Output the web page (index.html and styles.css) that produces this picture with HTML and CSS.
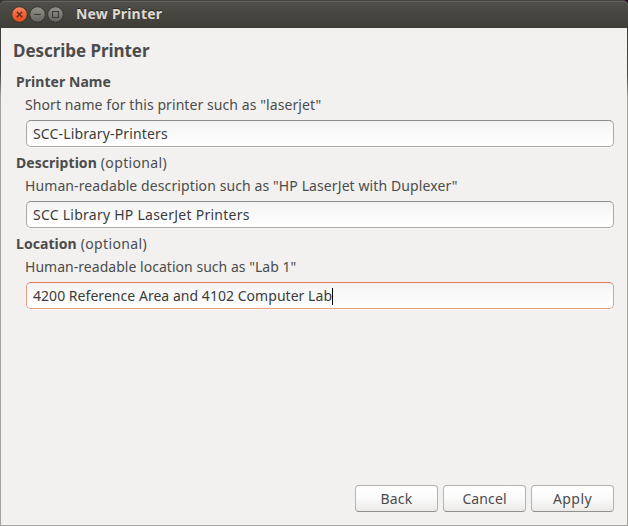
FILE: index.html
```html
<!DOCTYPE html>
<html lang="en">
<head>
<meta charset="utf-8">
<title>New Printer</title>
<link rel="stylesheet" href="styles.css">
</head>
<body>
<div class="window">
  <header class="titlebar">
    <svg class="controls" width="54" height="18" viewBox="0 0 54 18">
      <defs>
        <linearGradient id="orange" x1="0" y1="0" x2="0" y2="1"><stop offset="0" stop-color="#f58a63"/><stop offset=".5" stop-color="#ee6237"/><stop offset="1" stop-color="#e24c1d"/></linearGradient>
        <linearGradient id="grey" x1="0" y1="0" x2="0" y2="1"><stop offset="0" stop-color="#92918a"/><stop offset="1" stop-color="#65645d"/></linearGradient>
      </defs>
      <g stroke="#35342f">
        <circle cx="8.5" cy="9.5" r="7.8" fill="url(#orange)"/>
        <circle cx="26.5" cy="9.5" r="7.8" fill="url(#grey)"/>
        <circle cx="44.5" cy="9.5" r="7.8" fill="url(#grey)"/>
      </g>
      <g fill="none" stroke="#3c3b37" stroke-width="1.1">
        <path d="M5.800 6.800l5.400 5.400M11.200 6.800l-5.400 5.400" stroke="#622a17" stroke-width="1.300"/>
        <path d="M23 9.500h7"/>
        <path d="M41.500 6.500h6v6h-6z"/>
      </g>
    </svg>
    <span class="title">New Printer</span>
  </header>
  <main class="content">
    <h1 class="heading">Describe Printer</h1>
    <section class="group">
      <div class="label"><b class="name">Printer Name</b></div>
      <div class="hint hint-name">Short name for this printer such as "laserjet"</div>
      <div class="entry"><span class="value-name">SCC-Library-Printers</span></div>
    </section>
    <section class="group">
      <div class="label"><b class="name">Description</b> <span class="optional">(optional)</span></div>
      <div class="hint hint-description">Human-readable description such as "HP LaserJet with Duplexer"</div>
      <div class="entry"><span class="value-description">SCC Library HP LaserJet Printers</span></div>
    </section>
    <section class="group">
      <div class="label"><b class="name">Location</b> <span class="optional">(optional)</span></div>
      <div class="hint hint-location">Human-readable location such as "Lab 1"</div>
      <div class="entry focused"><span class="value-location">4200 Reference Area and 4102 Computer Lab</span><i class="caret"></i></div>
    </section>
  </main>
  <footer class="actions">
    <button class="button back">Back</button>
    <button class="button cancel">Cancel</button>
    <button class="button apply">Apply</button>
  </footer>
</div>
</body>
</html>
```
FILE: styles.css
```css
* { box-sizing: border-box; }
body {
  margin: 0;
  background: linear-gradient(90deg, #34332f 50%, #2c0a22 50%);
  font: 14px/20px "Noto Sans", sans-serif;
  color: #4c4c4c;
}
.window {
  display: flex;
  flex-direction: column;
  width: 628px;
  height: 526px;
  border-radius: 5px 5px 0 0;
  overflow: hidden;
  background: linear-gradient(#3c3b37 28px, #4b4a46 75px, #a5a39f 98px);
  padding: 0 1px 1px;
}
.titlebar {
  display: flex;
  align-items: flex-start;
  flex: none;
  height: 28px;
  margin: 0 -1px;
  padding: 3px 0 0 11px;
  border-top: 1px solid #45443f;
  border-radius: 5px 5px 0 0;
  box-shadow: inset 0 1px #63625c;
  background: linear-gradient(#504f49, #3d3c37);
}
.controls {
  display: block;
  margin-top: 1px;
}
.title {
  margin-left: 11px;
  color: #dfdbd2;
  font-weight: 700;
  letter-spacing: .2px;
  text-shadow: 0 -1px #2b2a27;
}
.content {
  flex: 1;
  padding: 12px 13px 0 12px;
  background: #f2f1f0;
}
.heading {
  margin: 0 0 10px;
  font-size: 17px;
  line-height: 22px;
  font-weight: 700;
  letter-spacing: -.05px;
}
.group { margin: 0 0 6px 3px; }
.label {
  display: flex;
  gap: 4px;
  height: 20px;
}
.name { letter-spacing: .05px; }
.optional { letter-spacing: .35px; }
.hint {
  height: 28px;
  padding: 3px 0 0 9px;
  white-space: nowrap;
}
.entry {
  display: flex;
  align-items: center;
  height: 27px;
  margin-left: 10px;
  padding: 1px 6px 0;
  border: 1px solid #aaa9a7;
  border-top-color: #8e8d8b;
  border-radius: 5px;
  background: linear-gradient(#f4f4f4, #fff);
  box-shadow: 0 1px #f8f8f7;
  color: #3c3c3c;
  white-space: nowrap;
}
.focused {
  border-color: #ea9f82;
  border-top-color: #e07f5b;
}
.caret {
  width: 1px;
  height: 17px;
  background: #000;
}
.hint-name { letter-spacing: .08px; }
.hint-description { letter-spacing: .1px; }
.hint-location { letter-spacing: .03px; }
.value-name { letter-spacing: .15px; }
.value-description { letter-spacing: .25px; }
.value-location { letter-spacing: .04px; }
.actions {
  display: flex;
  justify-content: flex-end;
  gap: 5px;
  flex: none;
  height: 40px;
  padding-right: 13px;
  background: #f2f1f0;
}
.button {
  width: 83px;
  height: 27px;
  padding: 0;
  border: 1px solid #b4b2af;
  border-bottom-color: #929190;
  border-radius: 4px;
  background: linear-gradient(#fff, #fafafa 50%, #ebeae9);
  color: #4c4c4c;
  font: inherit;
}
.back { letter-spacing: .2px; }
.cancel { letter-spacing: .1px; }
.apply { letter-spacing: .45px; }
```
